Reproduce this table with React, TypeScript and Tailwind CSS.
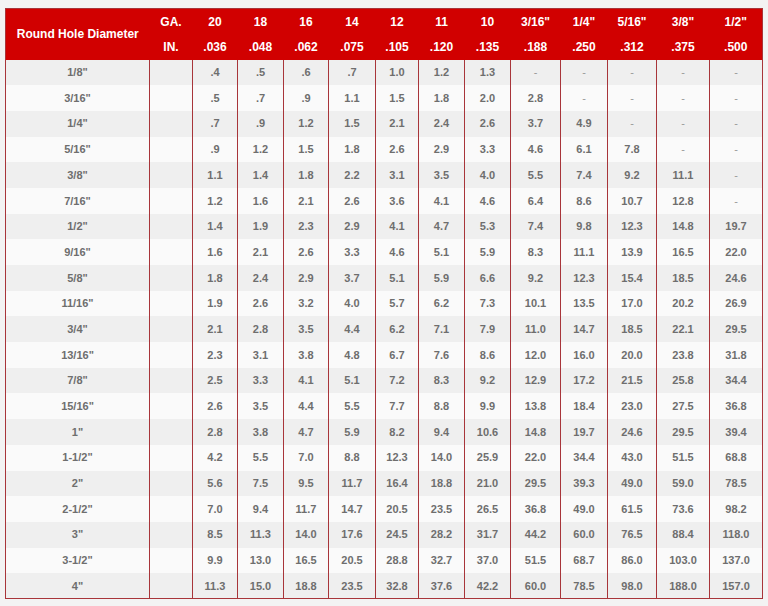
import React from "react";

const cols = [144, 43, 45, 46, 45, 47, 43, 46, 46, 50, 47, 49, 53, 53];
const ga = ["20", "18", "16", "14", "12", "11", "10", "3/16\"", "1/4\"", "5/16\"", "3/8\"", "1/2\""];
const inch = [".036", ".048", ".062", ".075", ".105", ".120", ".135", ".188", ".250", ".312", ".375", ".500"];

const rows: [string, string[]][] = [
  ["1/8\"", [".4", ".5", ".6", ".7", "1.0", "1.2", "1.3", "-", "-", "-", "-", "-"]],
  ["3/16\"", [".5", ".7", ".9", "1.1", "1.5", "1.8", "2.0", "2.8", "-", "-", "-", "-"]],
  ["1/4\"", [".7", ".9", "1.2", "1.5", "2.1", "2.4", "2.6", "3.7", "4.9", "-", "-", "-"]],
  ["5/16\"", [".9", "1.2", "1.5", "1.8", "2.6", "2.9", "3.3", "4.6", "6.1", "7.8", "-", "-"]],
  ["3/8\"", ["1.1", "1.4", "1.8", "2.2", "3.1", "3.5", "4.0", "5.5", "7.4", "9.2", "11.1", "-"]],
  ["7/16\"", ["1.2", "1.6", "2.1", "2.6", "3.6", "4.1", "4.6", "6.4", "8.6", "10.7", "12.8", "-"]],
  ["1/2\"", ["1.4", "1.9", "2.3", "2.9", "4.1", "4.7", "5.3", "7.4", "9.8", "12.3", "14.8", "19.7"]],
  ["9/16\"", ["1.6", "2.1", "2.6", "3.3", "4.6", "5.1", "5.9", "8.3", "11.1", "13.9", "16.5", "22.0"]],
  ["5/8\"", ["1.8", "2.4", "2.9", "3.7", "5.1", "5.9", "6.6", "9.2", "12.3", "15.4", "18.5", "24.6"]],
  ["11/16\"", ["1.9", "2.6", "3.2", "4.0", "5.7", "6.2", "7.3", "10.1", "13.5", "17.0", "20.2", "26.9"]],
  ["3/4\"", ["2.1", "2.8", "3.5", "4.4", "6.2", "7.1", "7.9", "11.0", "14.7", "18.5", "22.1", "29.5"]],
  ["13/16\"", ["2.3", "3.1", "3.8", "4.8", "6.7", "7.6", "8.6", "12.0", "16.0", "20.0", "23.8", "31.8"]],
  ["7/8\"", ["2.5", "3.3", "4.1", "5.1", "7.2", "8.3", "9.2", "12.9", "17.2", "21.5", "25.8", "34.4"]],
  ["15/16\"", ["2.6", "3.5", "4.4", "5.5", "7.7", "8.8", "9.9", "13.8", "18.4", "23.0", "27.5", "36.8"]],
  ["1\"", ["2.8", "3.8", "4.7", "5.9", "8.2", "9.4", "10.6", "14.8", "19.7", "24.6", "29.5", "39.4"]],
  ["1-1/2\"", ["4.2", "5.5", "7.0", "8.8", "12.3", "14.0", "25.9", "22.0", "34.4", "43.0", "51.5", "68.8"]],
  ["2\"", ["5.6", "7.5", "9.5", "11.7", "16.4", "18.8", "21.0", "29.5", "39.3", "49.0", "59.0", "78.5"]],
  ["2-1/2\"", ["7.0", "9.4", "11.7", "14.7", "20.5", "23.5", "26.5", "36.8", "49.0", "61.5", "73.6", "98.2"]],
  ["3\"", ["8.5", "11.3", "14.0", "17.6", "24.5", "28.2", "31.7", "44.2", "60.0", "76.5", "88.4", "118.0"]],
  ["3-1/2\"", ["9.9", "13.0", "16.5", "20.5", "28.8", "32.7", "37.0", "51.5", "68.7", "86.0", "103.0", "137.0"]],
  ["4\"", ["11.3", "15.0", "18.8", "23.5", "32.8", "37.6", "42.2", "60.0", "78.5", "98.0", "188.0", "157.0"]],
];

export default function App() {
  return (
    <div className="w-[768px] h-[606px] bg-[#f3f3f3] pt-[8px] pl-[5px] font-['Liberation_Sans',Arial,sans-serif]">
      <table className="table-fixed border-collapse w-[757px] border-[1.5px] border-[#a8353a]">
        <colgroup>
          {cols.map((w, i) => (
            <col key={i} style={{ width: w }} />
          ))}
        </colgroup>
        <thead>
          <tr className="bg-[#d10000] text-white text-[12px] font-bold h-[25.5px]">
            <th rowSpan={2} className="text-center font-bold">Round Hole Diameter</th>
            <th className="text-center">GA.</th>
            {ga.map((g, i) => (
              <th key={i} className="text-center">{g}</th>
            ))}
          </tr>
          <tr className="bg-[#d10000] text-white text-[12px] font-bold h-[25.5px]">
            <th className="text-center">IN.</th>
            {inch.map((g, i) => (
              <th key={i} className="text-center">{g}</th>
            ))}
          </tr>
        </thead>
        <tbody>
          {rows.map(([d, vals], r) => (
            <tr
              key={r}
              className={`h-[25.7px] text-[11px] font-bold text-[#6e6e6e] ${r % 2 === 0 ? "bg-[#efefef]" : "bg-[#fafafa]"}`}
            >
              <td className="text-center border-r-[1.5px] border-[#a8353a]">{d}</td>
              <td className="border-r-[1.5px] border-[#a8353a]"></td>
              {vals.map((v, i) => (
                <td
                  key={i}
                  className={`text-center border-r-[1.5px] border-[#a8353a] ${v === "-" ? "font-normal text-[#999]" : ""}`}
                >
                  {v}
                </td>
              ))}
            </tr>
          ))}
        </tbody>
      </table>
    </div>
  );
}
